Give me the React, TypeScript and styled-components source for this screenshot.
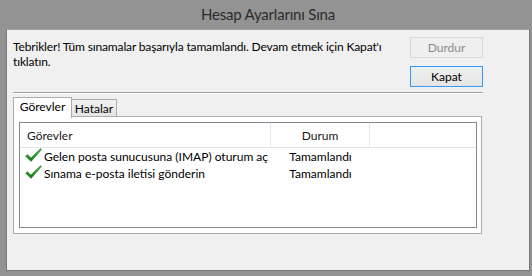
import React from "react";
import styled, { createGlobalStyle } from "styled-components";

const GlobalStyle = createGlobalStyle`
  html, body {
    margin: 0;
    background: #939393;
  }
  body {
    font-family: Lato, "Liberation Sans", sans-serif;
    font-size: 12px;
    color: #000;
  }
`;

interface Task {
  name: string;
  status: string;
}

const tasks: Task[] = [
  { name: "Gelen posta sunucusuna (IMAP) oturum aç", status: "Tamamlandı" },
  { name: "Sınama e-posta iletisi gönderin", status: "Tamamlandı" },
];

function Check() {
  return (
    <svg width="17" height="14" viewBox="0 0 17 14">
      <defs>
        <linearGradient id="chk" x1="0" y1="0" x2="0" y2="1">
          <stop offset="0" stopColor="#4cb84c" />
          <stop offset="1" stopColor="#137a13" />
        </linearGradient>
      </defs>
      <path
        d="M0.6 8.2 L2.4 6.6 L5.9 9.9 L15.6 0.6 L16.5 1.6 L6.1 13.4 Z"
        fill="url(#chk)"
        stroke="#1d6b1d"
        strokeWidth="0.5"
        strokeLinejoin="round"
      />
    </svg>
  );
}

function App() {
  return (
    <>
      <GlobalStyle />
      <Window>
        <TitleBar>Hesap Ayarlarını Sına</TitleBar>
        <Client>
          <Top>
            <Message>
              Tebrikler! Tüm sınamalar başarıyla tamamlandı. Devam etmek için Kapat'ı tıklatın.
            </Message>
            <Buttons>
              <Button disabled>Durdur</Button>
              <Button $default>Kapat</Button>
            </Buttons>
          </Top>
          <Separator />
          <TabStrip>
            <Tab $active $width={59}>Görevler</Tab>
            <Tab $width={45}>Hatalar</Tab>
          </TabStrip>
          <Panel>
            <List>
              <HeaderRow>
                <Cell $col={0}>Görevler</Cell>
                <Cell $col={1} $center>Durum</Cell>
                <Cell $col={2} />
              </HeaderRow>
              {tasks.map((t) => (
                <Row key={t.name}>
                  <Cell $col={0} $row>
                    <Check />
                    <span>{t.name}</span>
                  </Cell>
                  <Cell $col={1} $center $row>{t.status}</Cell>
                </Row>
              ))}
            </List>
          </Panel>
        </Client>
      </Window>
    </>
  );
}

const Window = styled.div`
  width: 532px;
  height: 276px;
  box-sizing: border-box;
  padding: 0 2px 5px 6px;
  display: flex;
  flex-direction: column;
  overflow: hidden;
`;

const TitleBar = styled.div`
  height: 29px;
  display: flex;
  align-items: center;
  justify-content: center;
  font-size: 15px;
  letter-spacing: -0.2px;
  color: #2b2b2b;
  padding-bottom: 1px;
  box-sizing: border-box;
`;

const Client = styled.div`
  flex: 1;
  background: #f0f0f0;
  border: 1px solid #7a7a7a;
  border-top-color: #a3a3a3;
  padding: 7px 46px 0 6px;
  display: flex;
  flex-direction: column;
`;

const Top = styled.div`
  display: flex;
  justify-content: space-between;
  align-items: flex-start;
`;

const Message = styled.div`
  width: 390px;
  margin-top: 2px;
  line-height: 15px;
  letter-spacing: -0.15px;
`;

const Buttons = styled.div`
  display: flex;
  flex-direction: column;
  gap: 8px;
  width: 73px;
`;

const Button = styled.button<{ $default?: boolean }>`
  height: 21px;
  box-sizing: border-box;
  padding: 0;
  font-family: inherit;
  font-size: 12px;
  color: #000;
  border: 1px solid ${(p) => (p.$default ? "#3399ff" : "#adadad")};
  background: linear-gradient(#f0f0f0, #e5e5e5);

  &:disabled {
    color: #8c8c8c;
    border-color: #d9d9d9;
    background: #efefef;
  }
`;

const Separator = styled.div`
  margin-top: 5px;
  border-top: 1px solid #a0a0a0;
  border-bottom: 1px solid #fff;
`;

const TabStrip = styled.div`
  margin-top: 3px;
  display: flex;
  align-items: flex-end;
  position: relative;
  z-index: 1;
`;

const Tab = styled.div<{ $active?: boolean; $width: number }>`
  width: ${(p) => p.$width}px;
  height: ${(p) => (p.$active ? 21 : 18)}px;
  margin-bottom: ${(p) => (p.$active ? -1 : 0)}px;
  box-sizing: border-box;
  border: 1px solid #acacac;
  border-bottom: ${(p) => (p.$active ? "none" : "1px solid #acacac")};
  border-left: ${(p) => (p.$active ? "1px solid #acacac" : "none")};
  background: ${(p) => (p.$active ? "#fff" : "linear-gradient(#f0f0f0, #e5e5e5)")};
  display: flex;
  align-items: center;
  justify-content: center;
  padding-bottom: ${(p) => (p.$active ? 3 : 0)}px;
`;

const Panel = styled.div`
  height: 118px;
  margin-right: 1px;
  margin-top: -1px;
  box-sizing: border-box;
  background: #fff;
  border: 1px solid #acacac;
  padding: 5px 4px 5px 5px;
  display: flex;
`;

const List = styled.div`
  flex: 1;
  border: 1px solid #828790;
  background: #fff;
`;

const HeaderRow = styled.div`
  height: 25px;
  box-sizing: border-box;
  display: flex;
  border-bottom: 1px solid #e5e5e5;
  color: #1a1a1a;
`;

const Row = styled.div`
  height: 17px;
  display: flex;
`;

const colWidths = [251, 99];

const Cell = styled.div<{ $col: number; $center?: boolean; $row?: boolean }>`
  ${(p) => (p.$col < 2 ? `width: ${colWidths[p.$col]}px;` : "flex: 1;")}
  box-sizing: border-box;
  display: flex;
  align-items: center;
  gap: 2px;
  justify-content: ${(p) => (p.$center ? "center" : "flex-start")};
  padding-left: ${(p) => (p.$col === 0 ? (p.$row ? 5 : 7) : 0)}px;
  border-right: ${(p) => (!p.$row && p.$col < 2 ? "1px solid #e3e8f0" : "none")};
  white-space: nowrap;
  overflow: hidden;

  svg {
    flex: none;
    margin-top: -3px;
  }
`;

export default App;
